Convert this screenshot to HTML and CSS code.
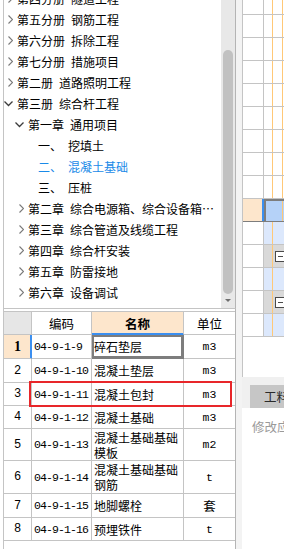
FILE: index.html
```html
<!DOCTYPE html>
<html lang="zh-CN">
<head>
<meta charset="utf-8">
<title>定额树</title>
<link rel="stylesheet" href="styles.css">
</head>
<body>
<div class="app">
  <div class="left">
    <div class="tree">
      <div class="tree-list">
        <div class="node l0"><span class="arr"><svg viewBox="0 0 9 9"><path class="rt" d="M4.5 0.5 L8.5 4.5 L4.5 8.5"/></svg></span><span class="txt">第四分册 隧道工程</span></div>
        <div class="node l0"><span class="arr"><svg viewBox="0 0 9 9"><path class="rt" d="M4.5 0.5 L8.5 4.5 L4.5 8.5"/></svg></span><span class="txt">第五分册 钢筋工程</span></div>
        <div class="node l0"><span class="arr"><svg viewBox="0 0 9 9"><path class="rt" d="M4.5 0.5 L8.5 4.5 L4.5 8.5"/></svg></span><span class="txt">第六分册 拆除工程</span></div>
        <div class="node l0"><span class="arr"><svg viewBox="0 0 9 9"><path class="rt" d="M4.5 0.5 L8.5 4.5 L4.5 8.5"/></svg></span><span class="txt">第七分册 措施项目</span></div>
        <div class="node l0"><span class="arr"><svg viewBox="0 0 9 9"><path class="rt" d="M4.5 0.5 L8.5 4.5 L4.5 8.5"/></svg></span><span class="txt">第二册 道路照明工程</span></div>
        <div class="node l0"><span class="arr"><svg viewBox="0 0 9 9"><path class="dn" d="M0.5 2.5 L4.5 6.5 L8.5 2.5"/></svg></span><span class="txt">第三册 综合杆工程</span></div>
        <div class="node l1"><span class="arr"><svg viewBox="0 0 9 9"><path class="dn" d="M0.5 2.5 L4.5 6.5 L8.5 2.5"/></svg></span><span class="txt">第一章 通用项目</span></div>
        <div class="node l2"><span class="txt">一、 挖填土</span></div>
        <div class="node l2 sel"><span class="txt">二、 混凝土基础</span></div>
        <div class="node l2"><span class="txt">三、 压桩</span></div>
        <div class="node l1"><span class="arr"><svg viewBox="0 0 9 9"><path class="rt" d="M4.5 0.5 L8.5 4.5 L4.5 8.5"/></svg></span><span class="txt">第二章 综合电源箱、综合设备箱…</span></div>
        <div class="node l1"><span class="arr"><svg viewBox="0 0 9 9"><path class="rt" d="M4.5 0.5 L8.5 4.5 L4.5 8.5"/></svg></span><span class="txt">第三章 综合管道及线缆工程</span></div>
        <div class="node l1"><span class="arr"><svg viewBox="0 0 9 9"><path class="rt" d="M4.5 0.5 L8.5 4.5 L4.5 8.5"/></svg></span><span class="txt">第四章 综合杆安装</span></div>
        <div class="node l1"><span class="arr"><svg viewBox="0 0 9 9"><path class="rt" d="M4.5 0.5 L8.5 4.5 L4.5 8.5"/></svg></span><span class="txt">第五章 防雷接地</span></div>
        <div class="node l1"><span class="arr"><svg viewBox="0 0 9 9"><path class="rt" d="M4.5 0.5 L8.5 4.5 L4.5 8.5"/></svg></span><span class="txt">第六章 设备调试</span></div>
      </div>
      <div class="vscroll">
        <div class="thumb"></div>
        <div class="down"></div>
      </div>
    </div>
    <div class="grid-panel">
      <table class="grid">
        <thead>
          <tr class="h24">
            <th class="c-no corner"></th>
            <th class="c-code">编码</th>
            <th class="c-name cur">名称</th>
            <th class="c-unit">单位</th>
          </tr>
        </thead>
        <tbody>
          <tr class="h24 active">
            <td class="c-no">1</td>
            <td class="c-code">04-9-1-9</td>
            <td class="c-name focus">碎石垫层</td>
            <td class="c-unit">m3</td>
          </tr>
          <tr class="h24">
            <td class="c-no">2</td>
            <td class="c-code">04-9-1-10</td>
            <td class="c-name">混凝土垫层</td>
            <td class="c-unit">m3</td>
          </tr>
          <tr class="h23">
            <td class="c-no">3</td>
            <td class="c-code">04-9-1-11</td>
            <td class="c-name">混凝土包封</td>
            <td class="c-unit">m3</td>
          </tr>
          <tr class="h23">
            <td class="c-no">4</td>
            <td class="c-code">04-9-1-12</td>
            <td class="c-name">混凝土基础</td>
            <td class="c-unit">m3</td>
          </tr>
          <tr class="h32">
            <td class="c-no">5</td>
            <td class="c-code">04-9-1-13</td>
            <td class="c-name two">混凝土基础基础<br>模板</td>
            <td class="c-unit">m2</td>
          </tr>
          <tr class="h33">
            <td class="c-no">6</td>
            <td class="c-code">04-9-1-14</td>
            <td class="c-name two">混凝土基础基础<br>钢筋</td>
            <td class="c-unit">t</td>
          </tr>
          <tr class="h24">
            <td class="c-no">7</td>
            <td class="c-code">04-9-1-15</td>
            <td class="c-name">地脚螺栓</td>
            <td class="c-unit cjk">套</td>
          </tr>
          <tr class="h23">
            <td class="c-no">8</td>
            <td class="c-code">04-9-1-16</td>
            <td class="c-name">预埋铁件</td>
            <td class="c-unit">t</td>
          </tr>
        </tbody>
      </table>
      <div class="mark"></div>
    </div>
  </div>
  <div class="split"></div>
  <div class="right">
    <div class="sheet">
      <div class="srow first"><div class="sc1"></div><div class="sc2 lines"></div></div>
      <div class="srow"><div class="sc1"></div><div class="sc2 lines"></div></div>
      <div class="srow"><div class="sc1"></div><div class="sc2 lines"></div></div>
      <div class="srow"><div class="sc1"></div><div class="sc2 lines"></div></div>
      <div class="srow"><div class="sc1"></div><div class="sc2 lines"></div></div>
      <div class="srow"><div class="sc1"></div><div class="sc2 lines"></div></div>
      <div class="srow"><div class="sc1"></div><div class="sc2 lines"></div></div>
      <div class="srow"><div class="sc1"></div><div class="sc2 lines"></div></div>
      <div class="srow"><div class="sc1"></div><div class="sc2 lines"></div></div>
      <div class="srow hl"><div class="sc1 cur"></div><div class="sc2 pick"></div></div>
      <div class="srow"><div class="sc1"></div><div class="sc2 blue"></div></div>
      <div class="srow"><div class="sc1"></div><div class="sc2 grey"><span class="minus"></span></div></div>
      <div class="srow"><div class="sc1"></div><div class="sc2 blue"></div></div>
      <div class="srow"><div class="sc1"></div><div class="sc2 grey"><span class="minus"></span></div></div>
      <div class="srow"><div class="sc1"></div><div class="sc2 blue"></div></div>
    </div>
    <div class="tabs"><span class="tab">工料机显示</span></div>
    <div class="note">修改应用</div>
  </div>
</div>
</body>
</html>
```

FILE: styles.css
```css
html, body {
  margin: 0;
  padding: 0;
  background: #ffffff;
}
body {
  width: 284px;
  height: 549px;
  overflow: hidden;
  font-family: "Noto Sans CJK SC", "Noto Sans", sans-serif;
  color: #000;
}
.app {
  display: flex;
  width: 284px;
  height: 549px;
}

/* ---------- left column ---------- */
.left {
  width: 236px;
  padding-left: 3px;
  box-sizing: border-box;
  display: flex;
  flex-direction: column;
  flex: none;
}
.tree {
  height: 309px;
  box-sizing: border-box;
  border-left: 1px solid #c4c4c4;
  border-right: 1px solid #b4b4b4;
  border-bottom: 1px solid #c4c4c4;
  display: flex;
  overflow: hidden;
  flex: none;
}
.tree-list {
  flex: 1;
  min-width: 0;
  overflow: hidden;
}
.tree-list .node:first-child {
  margin-top: -12px;
}
.node {
  height: 21px;
  display: flex;
  align-items: center;
  white-space: nowrap;
  font-size: 12px;
  line-height: 21px;
  word-spacing: 3.3px;
}
.node.l0 { padding-left: 0; }
.node.l1 { padding-left: 11px; }
.node.l2 { padding-left: 21px; }
.arr {
  width: 9px;
  height: 9px;
  flex: none;
  margin-right: 4px;
  display: block;
}
.node.l2 .txt { margin-left: 13px; }
.arr svg {
  width: 9px;
  height: 9px;
  display: block;
}
.arr path {
  fill: none;
  stroke-width: 1.1;
}
.arr path.rt { stroke: #7a7a7a; }
.arr path.dn { stroke: #3c3c3c; stroke-width: 1.3; }
.node.sel .txt { color: #1a8ae8; }

.vscroll {
  width: 14px;
  flex: none;
  background: #e8e8e8;
  display: flex;
  flex-direction: column;
  align-items: center;
  padding-top: 50px;
  box-sizing: border-box;
}
.thumb {
  width: 10px;
  height: 244px;
  background: #c1c1c1;
  border-radius: 5px;
}
.down {
  margin-top: 5px;
  width: 0;
  height: 0;
  border-left: 3px solid transparent;
  border-right: 3px solid transparent;
  border-top: 3px solid #6e6e6e;
}

/* ---------- bottom table ---------- */
.grid-panel {
  flex: 1;
  position: relative;
  border-left: 1px solid #c4c4c4;
  border-right: 1px solid #b4b4b4;
  padding-top: 2px;
}
.grid {
  border-collapse: separate;
  border-spacing: 0;
  table-layout: fixed;
  width: 231px;
}
.grid th, .grid td {
  box-sizing: border-box;
  border-right: 1px solid #c4c4c4;
  border-bottom: 1px solid #c4c4c4;
  padding: 0 0 0 2px;
  vertical-align: middle;
  white-space: nowrap;
  overflow: hidden;
}
.grid th {
  border-top: 1px solid #c4c4c4;
  font-weight: normal;
  font-size: 12.5px;
  text-align: center;
  padding: 0;
}
.grid .c-no { width: 28px; text-align: center; padding: 0; }
.grid .c-code { width: 60px; }
.grid .c-name { width: 92px; }
.grid .c-unit { width: 51px; border-right: none; text-align: center; padding: 0; }
.grid tr.h24 { height: 24px; }
.grid tr.h23 { height: 23px; }
.grid tr.h32 { height: 32px; }
.grid tr.h33 { height: 33px; }

.grid th.corner { background: #e6e6e6; }
.grid th.cur {
  background: #fde6cc;
  font-weight: bold;
  border-bottom-color: #3b8ff0;
  box-shadow: inset 0 -1px 0 #3b8ff0;
}
.grid td.c-no {
  font-family: "Liberation Mono", monospace;
  font-size: 12px;
}
.grid tr.active td.c-no {
  background: #fde6cc;
  font-family: "Liberation Serif", serif;
  font-weight: bold;
  font-size: 14px;
  border-right-color: #3b8ff0;
  box-shadow: inset -1px 0 0 #3b8ff0;
}
.grid td.c-code {
  font-family: "Liberation Mono", monospace;
  font-size: 11.5px;
  letter-spacing: -0.9px;
}
.grid td.c-name {
  font-size: 12px;
  line-height: 15px;
}
.grid td.focus {
  box-shadow: inset 0 0 0 2px #7d7d7d;
  border-right-color: #7d7d7d;
  border-bottom-color: #7d7d7d;
}
.grid td.c-unit {
  font-family: "Liberation Mono", monospace;
  font-size: 11.5px;
}
.grid td.c-unit.cjk {
  font-family: "Noto Sans CJK SC", sans-serif;
  font-size: 12.5px;
}
.mark {
  position: absolute;
  left: 25px;
  top: 72px;
  width: 203px;
  height: 26px;
  box-sizing: border-box;
  border: 2px solid #e8262a;
}

/* ---------- splitter ---------- */
.split {
  width: 6px;
  flex: none;
  background: #f3f3f3;
}

/* ---------- right side ---------- */
.right {
  flex: 1;
  display: flex;
  flex-direction: column;
  min-width: 0;
}
.sheet {
  height: 377px;
  flex: none;
  background: #fff;
  border-left: 1px solid #c4c4c4;
  box-sizing: border-box;
  overflow: hidden;
}
.srow {
  display: flex;
  height: 23px;
  box-sizing: border-box;
  border-bottom: 1px solid #c4c4c4;
}
.srow.first { height: 15px; }
.sc1 {
  width: 20px;
  flex: none;
  border-right: 1px solid #c4c4c4;
}
.sc2 {
  flex: 1;
  display: flex;
  align-items: center;
}
.sc2.lines {
  background:
    linear-gradient(to right, transparent 8px, #ffc877 8px, #ffc877 9px, transparent 9px),
    linear-gradient(to right, transparent 18px, #ffc877 18px, #ffc877 19px, transparent 19px);
}
.sc2.blue {
  background:
    linear-gradient(to right, transparent 8px, #ffc877 8px, #ffc877 9px, transparent 9px),
    #dce8fc;
}
.sc2.grey {
  background:
    linear-gradient(to right, transparent 8px, #ffc877 8px, #ffc877 9px, transparent 9px),
    #d9d9d9;
}
.srow.hl { border-bottom-color: #7d7d7d; }
.sc1.cur {
  background: #fde6cc;
  border-right-color: #3b8ff0;
  box-shadow: inset -1px 0 0 #3b8ff0;
}
.sc2.pick {
  background:
    linear-gradient(to right, transparent 18px, #ffc877 18px, #ffc877 19px, transparent 19px),
    #b5d2f8;
  box-shadow: inset 2px 2px 0 #7d7d7d;
}
.minus {
  margin-left: 11px;
  width: 11px;
  height: 11px;
  flex: none;
  box-sizing: border-box;
  border: 1px solid #4a4a4a;
  background: linear-gradient(#4a4a4a, #4a4a4a) center / 5px 1px no-repeat, #fff;
}
.tabs {
  height: 31px;
  flex: none;
  background: #f0f0f0;
  padding: 8px 0 0 8px;
  box-sizing: border-box;
  overflow: hidden;
  white-space: nowrap;
}
.tab {
  display: block;
  height: 23px;
  background: #c6c6c6;
  font-size: 12.5px;
  line-height: 23px;
  color: #2a2a2a;
  padding-left: 14px;
  overflow: hidden;
}
.note {
  flex: 1;
  background: #fff;
  font-size: 12.5px;
  color: #9a9a9a;
  padding: 11px 0 0 10px;
  white-space: nowrap;
  overflow: hidden;
  line-height: 16px;
}
```
